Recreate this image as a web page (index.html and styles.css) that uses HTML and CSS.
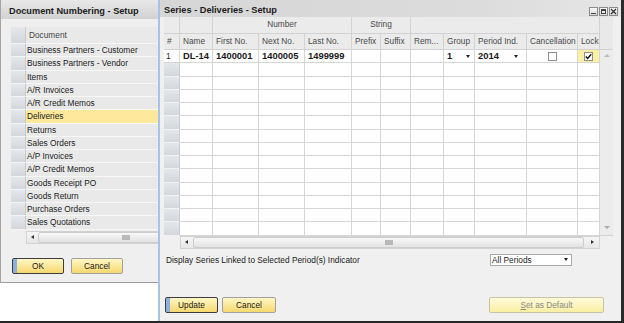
FILE: index.html
```html
<!DOCTYPE html>
<html lang="en">
<head>
    <meta charset="UTF-8">
    <title>Document Numbering - Setup</title>
    <link rel="stylesheet" href="styles.css">
</head>
<body>
<div class="screen">

    <div class="win win-doc">
        <div class="titlebar">Document Numbering - Setup</div>
        <div class="win-body">
            <div class="list">
                <div class="list-head"><span class="rn"></span><span class="cell">Document</span></div>
                <div class="list-row"><span class="rn"></span><span class="cell">Business Partners - Customer</span></div>
                <div class="list-row"><span class="rn"></span><span class="cell">Business Partners - Vendor</span></div>
                <div class="list-row"><span class="rn"></span><span class="cell">Items</span></div>
                <div class="list-row"><span class="rn"></span><span class="cell">A/R Invoices</span></div>
                <div class="list-row"><span class="rn"></span><span class="cell">A/R Credit Memos</span></div>
                <div class="list-row sel"><span class="rn"></span><span class="cell">Deliveries</span></div>
                <div class="list-row"><span class="rn"></span><span class="cell">Returns</span></div>
                <div class="list-row"><span class="rn"></span><span class="cell">Sales Orders</span></div>
                <div class="list-row"><span class="rn"></span><span class="cell">A/P Invoices</span></div>
                <div class="list-row"><span class="rn"></span><span class="cell">A/P Credit Memos</span></div>
                <div class="list-row"><span class="rn"></span><span class="cell">Goods Receipt PO</span></div>
                <div class="list-row"><span class="rn"></span><span class="cell">Goods Return</span></div>
                <div class="list-row"><span class="rn"></span><span class="cell">Purchase Orders</span></div>
                <div class="list-row"><span class="rn"></span><span class="cell">Sales Quotations</span></div>
                <div class="hscroll list-scroll">
                    <span class="arr-left"></span>
                    <span class="thumb"><span class="grip"></span></span>
                </div>
            </div>
            <div class="btn-row">
                <button class="btn btn-default">OK</button>
                <button class="btn">Cancel</button>
            </div>
        </div>
    </div>

    <div class="win win-series">
        <div class="titlebar">
            Series - Deliveries - Setup
            <div class="win-ctrls">
                <span class="ctrl ctrl-min"></span>
                <span class="ctrl ctrl-max"></span>
                <span class="ctrl ctrl-close">
                    <svg width="7" height="7" viewBox="0 0 7 7"><path d="M1 1L6 6M6 1L1 6" stroke="#333" stroke-width="1.3"/></svg>
                </span>
            </div>
        </div>

        <div class="grid">
            <span class="corner"></span>
            <span class="vscroll"><i class="arr-up"></i><i class="arr-down"></i></span>

            <!-- header -->
            <span class="h"></span><span class="h"></span>
            <span class="h center span3">Number</span>
            <span class="h center span2">String</span>
            <span class="h span5"></span>

            <span class="h">#</span><span class="h">Name</span><span class="h">First No.</span><span class="h">Next No.</span>
            <span class="h">Last No.</span><span class="h">Prefix</span><span class="h">Suffix</span><span class="h">Rem...</span>
            <span class="h">Group</span><span class="h">Period Ind.</span><span class="h">Cancellation</span><span class="h">Lock</span>

            <!-- row 1 -->
            <span class="num">1</span><span class="b">DL-14</span><span class="b">1400001</span><span class="b">1400005</span>
            <span class="b">1499999</span><span></span><span></span><span></span>
            <span class="b combo combo-group">1<i class="drop"></i></span>
            <span class="b combo combo-period">2014<i class="drop"></i></span>
            <span class="chk-cell"><i class="chk"></i></span>
            <span class="chk-cell lock"><i class="chk">
                <svg width="7" height="7" viewBox="0 0 7 7"><path d="M0.8 3.6L2.7 5.5L6.2 1.2" fill="none" stroke="#111" stroke-width="1.4"/></svg>
            </i></span>

            <!-- empty rows -->
            <span class="rn"></span><span></span><span></span><span></span><span></span><span></span><span></span><span></span><span></span><span></span><span></span><span></span>
            <span class="rn"></span><span></span><span></span><span></span><span></span><span></span><span></span><span></span><span></span><span></span><span></span><span></span>
            <span class="rn"></span><span></span><span></span><span></span><span></span><span></span><span></span><span></span><span></span><span></span><span></span><span></span>
            <span class="rn"></span><span></span><span></span><span></span><span></span><span></span><span></span><span></span><span></span><span></span><span></span><span></span>
            <span class="rn"></span><span></span><span></span><span></span><span></span><span></span><span></span><span></span><span></span><span></span><span></span><span></span>
            <span class="rn"></span><span></span><span></span><span></span><span></span><span></span><span></span><span></span><span></span><span></span><span></span><span></span>
            <span class="rn"></span><span></span><span></span><span></span><span></span><span></span><span></span><span></span><span></span><span></span><span></span><span></span>
            <span class="rn"></span><span></span><span></span><span></span><span></span><span></span><span></span><span></span><span></span><span></span><span></span><span></span>
            <span class="rn"></span><span></span><span></span><span></span><span></span><span></span><span></span><span></span><span></span><span></span><span></span><span></span>
            <span class="rn"></span><span></span><span></span><span></span><span></span><span></span><span></span><span></span><span></span><span></span><span></span><span></span>
            <span class="rn"></span><span></span><span></span><span></span><span></span><span></span><span></span><span></span><span></span><span></span><span></span><span></span>
            <span class="rn"></span><span></span><span></span><span></span><span></span><span></span><span></span><span></span><span></span><span></span><span></span><span></span>
            <span class="rn"></span><span></span><span></span><span></span><span></span><span></span><span></span><span></span><span></span><span></span><span></span><span></span>

            <!-- scroll row -->
            <span class="blank"></span>
            <span class="hscroll grid-scroll">
                <span class="arr-left"></span>
                <span class="thumb"><span class="grip"></span></span>
                <span class="arr-right"></span>
            </span>
            <span class="blank"></span>
        </div>

        <div class="filter-row">
            <span>Display Series Linked to Selected Period(s) Indicator</span>
            <span class="select">All Periods<i class="drop"></i></span>
        </div>

        <div class="btn-row series-btns">
            <button class="btn btn-default">Update</button>
            <button class="btn btn-cancel">Cancel</button>
            <button class="btn btn-disabled"><u>S</u>et as Default</button>
        </div>
    </div>

</div>
</body>
</html>
```

FILE: styles.css
```css
body {
    margin: 0;
    background: #fff;
    font-family: "Liberation Sans", Arial, sans-serif;
    font-size: 8.3px;
    color: #1a1a1a;
}
.screen {
    position: relative;
    width: 624px;
    height: 323px;
    overflow: hidden;
    box-sizing: border-box;
    border-bottom: 2px solid #262626;
}

/* windows */
.win {
    position: absolute;
    top: 0;
    background: #efefef;
    box-sizing: border-box;
}
.win-doc {
    left: 0;
    width: 230px;
    height: 283px;
    border-left: 1px solid #a4a4a4;
    border-bottom: 1px solid #9c9c9c;
}
.win-series {
    left: 158px;
    width: 466px;
    height: 323px;
    border-left: 2px solid #a8c3e5;
    border-right: 3px solid #2b2b2b;
    border-bottom: 2px solid #2b2b2b;
    background: #f0f0f0;
}
.titlebar {
    display: flex;
    align-items: center;
    box-sizing: border-box;
    height: 19px;
    padding: 3px 0 0 8px;
    font-size: 9.2px;
    font-weight: bold;
    color: #1c1c1c;
    background: linear-gradient(#e8e8e8, #d2d2d2);
}
.win-series .titlebar {
    height: 17px;
    padding: 2px 0 0 4px;
    background: linear-gradient(90deg, #d6d6d6, #dcdcdc 70%, #e6e6e6);
}
.win-ctrls {
    display: flex;
    gap: 1px;
    margin-left: auto;
    margin-right: 3px;
    align-self: flex-end;
    margin-bottom: 1px;
}
.ctrl {
    display: flex;
    align-items: center;
    justify-content: center;
    width: 9px;
    height: 9px;
    box-sizing: border-box;
    border: 1px solid #8a8a8a;
    background: linear-gradient(#fafafa, #d9d9d9);
}
.ctrl-min::after {
    content: "";
    width: 5px;
    height: 1px;
    margin-top: 4px;
    background: #444;
}
.ctrl-max::after {
    content: "";
    width: 5px;
    height: 5px;
    box-sizing: border-box;
    border: 1px solid #444;
    border-top-width: 2px;
}

/* left list */
.win-doc .win-body {
    padding: 8px 0 0 10px;
}
.list {
    width: 210px;
}
.list-head, .list-row {
    display: flex;
}
.list-head {
    height: 17px;
}
.list-row {
    height: 13.28px;
}
.rn {
    width: 15px;
    flex: none;
    box-sizing: border-box;
    background: linear-gradient(#e4e7eb, #d3d7dc);
    border-right: 1px solid #c7cbd0;
    border-bottom: 1px solid #f4f4f4;
}
.cell {
    flex: 1;
    box-sizing: border-box;
    background: #e9e9e9;
    border-bottom: 1px solid #f7f7f7;
    padding-left: 1px;
    line-height: 12.28px;
    white-space: nowrap;
}
.list-head .cell {
    padding-left: 3px;
    line-height: 16px;
    color: #444;
}
.list-row.sel .cell {
    background: #fde89b;
}

/* scrollbars */
.hscroll {
    display: flex;
    align-items: center;
    height: 13px;
    box-sizing: border-box;
    border: 1px solid #d2d2d2;
    background: linear-gradient(#f6f6f6, #e6e6e6);
}
.list-scroll {
    margin: 1px 0 0 15px;
}
.arr-left, .arr-right {
    width: 10px;
    display: flex;
    justify-content: center;
    flex: none;
}
.arr-left::after {
    content: "";
    border-top: 2.5px solid transparent;
    border-bottom: 2.5px solid transparent;
    border-right: 3px solid #333;
}
.arr-right {
    width: 13px;
}
.arr-right::after {
    content: "";
    border-top: 2.5px solid transparent;
    border-bottom: 2.5px solid transparent;
    border-left: 3px solid #333;
}
.thumb {
    flex: 1;
    height: 11px;
    box-sizing: border-box;
    margin-left: 1px;
    border: 1px solid #cdcdcd;
    border-radius: 2px;
    background: linear-gradient(#f8f8f8, #e2e2e2);
    display: flex;
    align-items: center;
    justify-content: center;
}
.list-scroll .thumb {
    flex: none;
    width: 175px;
}
.grip {
    width: 8px;
    height: 5px;
    background-image: radial-gradient(circle, #9b9b9b 0.6px, transparent 0.9px);
    background-size: 2px 2px;
}

/* buttons */
.btn-row {
    display: flex;
    gap: 7px;
    margin: 14px 0 0 1px;
}
.btn {
    width: 52px;
    height: 16px;
    padding: 0;
    font-family: inherit;
    font-size: 8.3px;
    color: #1a1a1a;
    border: 1px solid #a0a0a0;
    border-radius: 2px;
    background: linear-gradient(#fff7c4, #f6d86e);
}
.btn-default {
    border-color: #3d3d3d;
    box-shadow: inset 4px 0 0 #8db1df;
}
.btn-cancel {
    width: 54px;
}
.series-btns {
    gap: 4px;
    margin: 31px 17px 0 5px;
}
.series-btns .btn-default {
    width: 53px;
}
.btn-disabled {
    width: 115px;
    margin-left: auto;
    color: #8a8a8a;
    border-color: #c8c4a4;
    background: linear-gradient(#fffbd8, #faeea2);
}

/* series grid */
.grid {
    display: grid;
    grid-template-columns: 16px 33px 46px 46px 47px 29px 30px 33px 31px 52px 51px 22px 13px;
    grid-template-rows: 16.5px 16.5px repeat(14, 13.28px) 13px;
    margin-left: 4px;
}
.grid > span {
    box-sizing: border-box;
    background: #fff;
    border-right: 1px solid #d6d6d6;
    border-bottom: 1px solid #d6d6d6;
    padding-left: 3px;
    line-height: 12.28px;
    white-space: nowrap;
    overflow: hidden;
}
.grid > .h {
    background: #ebebeb;
    border-color: #d2d2d2;
    color: #4a4a4a;
    line-height: 15.5px;
}
.grid > .center {
    text-align: center;
    padding-left: 0;
}
.span3 { grid-column: span 3; }
.span2 { grid-column: span 2; }
.span5 { grid-column: span 5; }
.grid > .corner {
    grid-column: 13;
    grid-row: 1 / span 2;
    background: #e9e9e9;
    border-right: none;
    border-color: #d2d2d2;
}
.grid > .vscroll {
    grid-column: 13;
    grid-row: 3 / span 14;
    display: flex;
    flex-direction: column;
    justify-content: space-between;
    align-items: center;
    padding: 4px 0 6px;
    background: #ececec;
    border-right: none;
    border-bottom: 1px solid #d2d2d2;
}
.arr-up {
    border-left: 3px solid transparent;
    border-right: 3px solid transparent;
    border-bottom: 3px solid #b9b9b9;
}
.arr-down {
    border-left: 3px solid transparent;
    border-right: 3px solid transparent;
    border-top: 3px solid #a9a9a9;
}
.grid > .rn {
    width: auto;
    background: linear-gradient(#e3e6ea, #d4d8dd);
    border-right: 1px solid #c9ccd0;
    border-bottom: 1px solid #f2f2f2;
}
.grid > .num {
    padding-left: 2px;
}
.grid > .b {
    font-weight: bold;
    font-size: 9.4px;
}
.grid > .combo {
    display: flex;
    align-items: center;
    justify-content: space-between;
    padding-right: 4px;
}
.grid > .combo-period {
    padding-right: 8px;
}
.drop {
    border-left: 2.5px solid transparent;
    border-right: 2.5px solid transparent;
    border-top: 3px solid #222;
}
.grid > .chk-cell {
    display: flex;
    align-items: center;
    justify-content: center;
    padding-left: 0;
}
.grid > .lock {
    background: #fcf0a2;
}
.chk {
    display: flex;
    align-items: center;
    justify-content: center;
    width: 9px;
    height: 9px;
    box-sizing: border-box;
    border: 1px solid #8e8e8e;
    background: #fff;
}
.grid > .blank {
    background: transparent;
    border: none;
}
.grid > .grid-scroll {
    grid-column: 2 / span 11;
    padding-left: 0;
    border: 1px solid #d2d2d2;
    background: linear-gradient(#f6f6f6, #e6e6e6);
    display: flex;
}
.grid-scroll .thumb {
    margin-left: 2px;
    margin-right: 2px;
}

/* filter */
.filter-row {
    display: flex;
    align-items: center;
    justify-content: space-between;
    height: 12px;
    margin-top: 5px;
    padding: 0 49px 0 6px;
}
.select {
    display: flex;
    align-items: center;
    justify-content: space-between;
    width: 82px;
    height: 12px;
    box-sizing: border-box;
    padding: 0 3px 0 1px;
    background: #fff;
    border: 1px solid #a9a9a9;
}
```
